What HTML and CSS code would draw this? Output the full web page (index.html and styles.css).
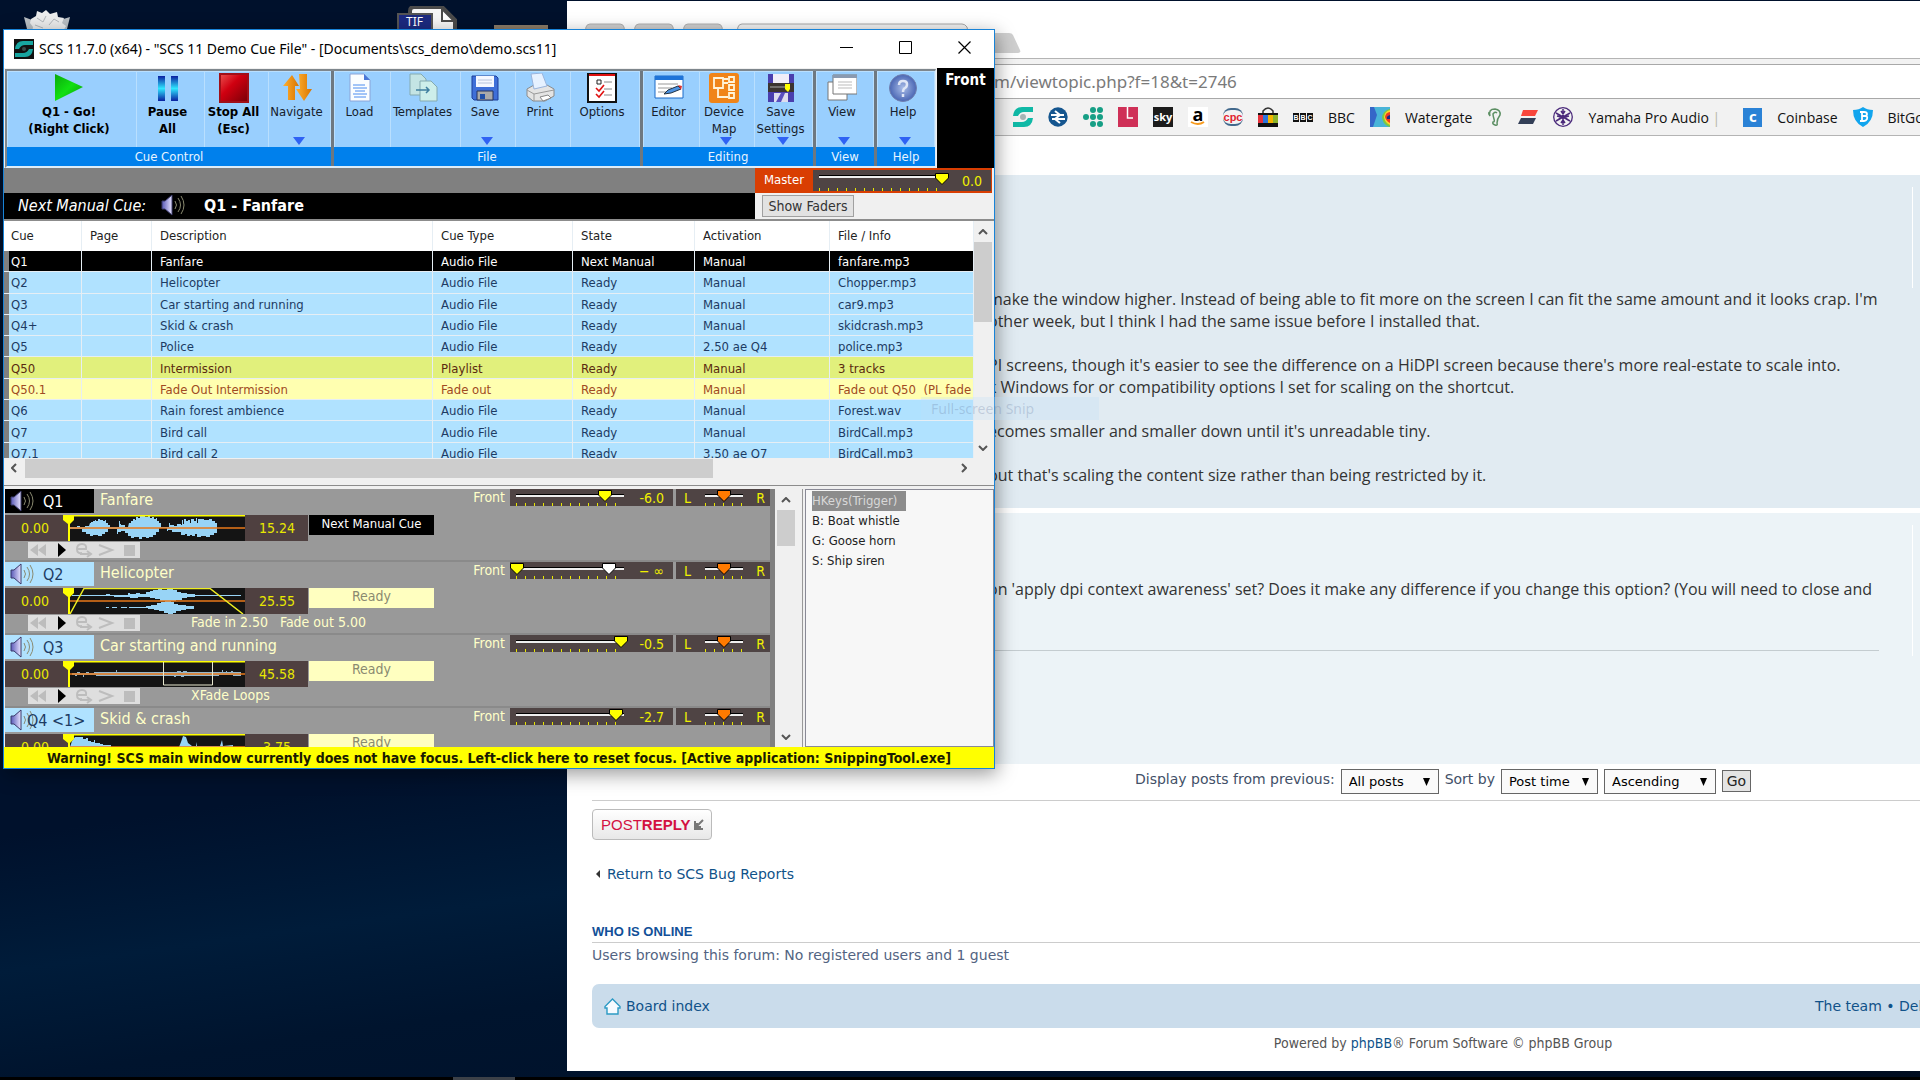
FILE: index.html
```html
<!DOCTYPE html>
<html lang="en">
<head>
<meta charset="utf-8">
<title>Desktop</title>
<link rel="stylesheet" href="styles.css">
</head>
<body>
<svg class="defs" aria-hidden="true">
  <defs>
    <linearGradient id="gGo" x1="0" y1="0" x2="1" y2="1"><stop offset="0" stop-color="#0aa80a"/><stop offset=".5" stop-color="#12e012"/><stop offset="1" stop-color="#0a9a0a"/></linearGradient>
    <linearGradient id="gPause" x1="0" y1="0" x2="0" y2="1"><stop offset="0" stop-color="#0a1fa0"/><stop offset=".5" stop-color="#2fe6ff"/><stop offset="1" stop-color="#0a1fa0"/></linearGradient>
    <linearGradient id="gStop" x1="0" y1="0" x2="1" y2="1"><stop offset="0" stop-color="#e84a4a"/><stop offset=".4" stop-color="#d00010"/><stop offset="1" stop-color="#7c0008"/></linearGradient>
    <linearGradient id="gNav" x1="0" y1="0" x2="1" y2="0"><stop offset="0" stop-color="#ffb030"/><stop offset="1" stop-color="#d87400"/></linearGradient>
    <linearGradient id="gSpk" x1="0" y1="0" x2="1" y2="0"><stop offset="0" stop-color="#5a5ab8"/><stop offset="1" stop-color="#e8e4ff"/></linearGradient>
    <radialGradient id="gHelp"><stop offset="0" stop-color="#a9bde8"/><stop offset="1" stop-color="#4a66b4"/></radialGradient>
    <symbol id="speaker" viewBox="0 0 24 22">
      <path d="M1 7h3l7-6v20l-7-6H1z" fill="url(#gSpk)" stroke="#3a3a6a" stroke-width="1"/>
      <path d="M14 7q3 4 0 8M17 4q5 7 0 14M20 2q6 9 0 18" fill="none" stroke="#8a8a70" stroke-width="1"/>
    </symbol>
    <symbol id="transport" viewBox="0 0 112 16">
      <path d="M10 2v12L2 8zM18 2v12l-8-6z" fill="#bdbdbd"/>
      <path d="M30 1v14l8-7z" fill="#000"/>
      <path d="M49 7h9q1-5-4-5-5 0-5 5t5 4M52 12h9M59 9l4 3-4 3" fill="none" stroke="#bdbdbd" stroke-width="2"/>
      <path d="M71 3l13 5-13 5" fill="none" stroke="#bdbdbd" stroke-width="2"/>
      <path d="M96 3h11v11H96z" fill="#bdbdbd"/>
    </symbol>
    <symbol id="marker" viewBox="0 0 14 27"><path d="M1 0h11v5L8 9v18H6V9L1 5z" fill="#ff0"/></symbol>
    <symbol id="floppy" viewBox="0 0 30 30">
      <path d="M2 3h24l2 2v22H4l-2-2z" fill="#3f6fd8" stroke="#1d3f9a"/>
      <path d="M6 3h18v11H6z" fill="#f4f7ff"/><path d="M8 7h14M8 10h14" stroke="#b8c4dc"/>
      <path d="M7 18h16v9H7z" fill="#a9a9a9" stroke="#27355e"/><path d="M10 21h5v5h-5z" fill="#1f4fa8"/>
    </symbol>
  </defs>
</svg>

<main class="desktop">
  <svg class="desk-icon bin" width="48" height="24" viewBox="0 0 48 24"><path d="M1 8l4 16h38l4-16-10 3H9z" fill="#b9bfc3"/><path d="M8 10l5-3 1-5 5 2 4-3 4 4 7-2 1 5 6 1-2 5 4 3-4 7H9l1-6-3-4z" fill="#eceded"/><path d="M14 9l6 4 3-6M26 16l5-6 5 3M12 16l8 3" fill="none" stroke="#b3b8bc"/></svg>
  <svg class="desk-icon tif" width="62" height="26" viewBox="0 0 62 26"><path d="M14 26V5q0-4 4-4h28l13 13v12" fill="#f6f6f6" stroke="#4b4b4b" stroke-width="4"/><path d="M46 3v12h12z" fill="#fff" stroke="#4b4b4b" stroke-width="2"/><rect x="2" y="8" width="34" height="20" fill="#1c2a80" stroke="#555" stroke-width="2"/><text x="10" y="20" class="tif-text">TIF</text></svg>
  <span class="desk-icon chest"></span>

  <section class="browser">
    <div class="tabstrip">
      <svg width="480" height="35" viewBox="0 0 480 35"><g fill="#cfcfcf" stroke="#b0b0b0"><path d="M14 35L19 4q1-3 4-3h30q3 0 4 3l4 31z"/><path d="M63 35L68 4q1-3 4-3h30q3 0 4 3l4 31z"/><path d="M112 35L117 4q1-3 4-3h30q3 0 4 3l4 31z"/></g><path d="M165 35L171 4q1-3 4-3h220q3 0 5 3l6 31z" fill="#f2f2f2" stroke="#a8a8a8"/><path d="M418 10h24q3 0 4 2l7 15q1 3-2 3h-25z" fill="#cfcfcf"/></svg>
    </div>
    <div class="omnibar"><input class="url" type="text" aria-label="Address" value="m/viewtopic.php?f=18&amp;t=2746"></div>
    <nav class="bookmarks" aria-label="Bookmarks">
      <a href="#" aria-label="SCS"><svg width="20" height="20" viewBox="0 0 20 20"><path d="M20 0v5h-9q-4 0-6 4l-5 0q1-9 9-9zM0 20v-5h9q4 0 6-4h5q-1 9-9 9z" fill="#10b9a6"/><circle cx="10" cy="10" r="3" fill="#a7b4b4"/></svg></a>
      <a href="#" aria-label="National Rail"><svg width="20" height="20" viewBox="0 0 20 20"><circle cx="10" cy="10" r="9.700" fill="#15568f"/><path d="M3 8h13M4 12h13M7 4l5 4-5 4 5 4" fill="none" stroke="#fff" stroke-width="2"/></svg></a>
      <a href="#" aria-label="Dots"><svg width="20" height="20" viewBox="0 0 20 20" fill="#169f85"><circle cx="3" cy="10" r="3"/><circle cx="10" cy="3" r="3"/><circle cx="10" cy="10" r="3"/><circle cx="10" cy="17" r="3"/><circle cx="17" cy="3" r="3"/><circle cx="17" cy="10" r="3"/><circle cx="17" cy="17" r="3"/></svg></a>
      <a href="#" aria-label="L"><svg width="20" height="20" viewBox="0 0 20 20"><path d="M0 0h20v20H0z" fill="#cf3057"/><path d="M9.500 0v11H15" fill="none" stroke="#fff" stroke-width="1.500"/></svg></a>
      <a href="#" class="bm-sky">sky</a>
      <a href="#" class="bm-amazon"><span>a</span><svg width="20" height="5" viewBox="0 0 20 5"><path d="M3 1q7 4 13 0" fill="none" stroke="#f79a1c" stroke-width="2"/></svg></a>
      <a href="#" class="bm-cpc">cpc</a>
      <a href="#" aria-label="Bag"><svg width="20" height="20" viewBox="0 0 20 20"><path d="M5 7V4q5-6 10 0v3" fill="none" stroke="#333" stroke-width="1.500"/><path d="M0 6h20v14H0z" fill="#111"/><path d="M0 8h5v8H0z" fill="#e8303a"/><path d="M5 8h5v8H5z" fill="#2a74dc"/><path d="M10 8h5v8h-5z" fill="#f4b400"/><path d="M15 8h5v8h-5z" fill="#8cb42a"/></svg></a>
      <a href="#"><span class="bm-bbc"><b>B</b><b>B</b><b>C</b></span>BBC</a>
      <a href="#"><svg width="20" height="20" viewBox="0 0 20 20"><path d="M0 0h20v20H0z" fill="#3566c8"/><path d="M3 20L7 8 4 0h16v20z" fill="#49b4d8"/><path d="M20 2a9 9 0 0 0-8 9q2 8 8 9z" fill="#7ac943"/><path d="M20 3a8 8 0 0 0-6 7q1 6 6 8z" fill="#ffd42a"/><path d="M20 5a6 6 0 0 0-5 5q1 4 5 6z" fill="#ef3b24"/><path d="M20 8q-4 1-3 4h3z" fill="#1c2a80"/></svg>Watergate</a>
      <a href="#" aria-label="Ear" class="bm-tight"><svg width="16" height="20" viewBox="0 0 16 20"><path d="M3 9Q1 2 8 2q6 1 5 6-3 4-3 8 1 3-2 2-3-1-2-3 2 0 1-3-1-3-1-5 2-3 4-1M3 9q-2-2-1-4" fill="none" stroke="#5c8f63" stroke-width="1.500"/></svg></a>
      <a href="#" aria-label="Stripes"><svg width="20" height="20" viewBox="0 0 20 20"><path d="M5 3h15l-3 6H3z" fill="#f8463c"/><path d="M3 11h15l-3 6H0z" fill="#333f57"/></svg></a>
      <a href="#"><svg width="20" height="20" viewBox="0 0 20 20" fill="none" stroke="#4b2a7b"><circle cx="10" cy="10" r="9.300" stroke-width="1.300"/><path d="M10 2v16M3 6l14 8M17 6L3 14M8 4l2 3 2-3M8 16l2-3 2 3M4 9l4 1-3 3M16 9l-4 1 3 3" stroke-width="1.500"/></svg><span>Yamaha Pro Audio <span class="faded">|</span></span></a>
      <a href="#" class="bm-gap"><span class="bm-coin">c</span>Coinbase</a>
      <a href="#"><svg width="20" height="20" viewBox="0 0 20 20"><path d="M0 3q6 0 10-3 4 3 10 3 0 12-10 17Q0 15 0 3z" fill="#12a5ee"/><path d="M7 5h4q3 0 3 2t-2 2q3 0 2 3-1 2-3 2H7M9 5v9M9 9h3" fill="none" stroke="#fff" stroke-width="1.800"/></svg>BitGo</a>
    </nav>
    <div class="forum">
      <article class="post post-a">
        <div class="postbody">
          <p>make the window higher. Instead of being able to fit more on the screen I can fit the same amount and it looks crap. I'm</p>
          <p>other week, but I think I had the same issue before I installed that.</p>
          <p>&nbsp;</p>
          <p>PI screens, though it's easier to see the difference on a HiDPI screen because there's more real-estate to scale into.</p>
          <p>k Windows for or compatibility options I set for scaling on the shortcut.</p>
          <p>&nbsp;</p>
          <p>ecomes smaller and smaller down until it's unreadable tiny.</p>
          <p>&nbsp;</p>
          <p>but that's scaling the content size rather than being restricted by it.</p>
        </div>
        <aside class="profile"></aside>
      </article>
      <article class="post post-b">
        <div class="postbody">
          <p>on 'apply dpi context awareness' set? Does it make any difference if you change this option? (You will need to close and</p>
          <hr>
        </div>
        <aside class="profile"></aside>
      </article>
      <form class="sort">
        <label for="st">Display posts from previous:</label>
        <select id="st" class="s1"><option>All posts</option></select>
        <label for="sk">Sort by</label>
        <select id="sk" class="s2"><option>Post time</option></select>
        <select id="sd" class="s3" aria-label="Direction"><option>Ascending</option></select>
        <button type="button" class="go">Go</button>
      </form>
      <button type="button" class="reply">POST<b>REPLY</b><svg width="10" height="11" viewBox="0 0 10 11"><path d="M9 1L3 7M1 2v8h8M3 4v4h4" fill="none" stroke="#777" stroke-width="2"/></svg></button>
      <p class="return"><svg width="5" height="8" viewBox="0 0 5 8"><path d="M4 0v8L0 4z" fill="#333"/></svg><a href="#">Return to SCS Bug Reports</a></p>
      <h3>WHO IS ONLINE</h3>
      <p class="online">Users browsing this forum: No registered users and 1 guest</p>
      <div class="navbar">
        <a href="#"><svg width="17" height="17" viewBox="0 0 17 17"><path d="M8.500 1L16 8.500V10h-2v6H3v-6H1V8.500z" fill="#f6fbff" stroke="#2c9ac4" stroke-width="1.400"/></svg>Board index</a>
        <span class="team"><a href="#">The team</a> • <a href="#">Delete all</a></span>
      </div>
      <p class="powered">Powered by <a href="#">phpBB</a>® Forum Software © phpBB Group</p>
    </div>
  </section>

  <section class="scs">
    <header class="titlebar">
      <svg width="20" height="20" viewBox="0 0 20 20"><path d="M0 0h20v20H0z" fill="#111"/><path d="M19 2v4h-8q-4 0-6 4H1q1-8 8-8zM1 18v-4h8q4 0 6-4h4q-1 8-8 8z" fill="#18a5a0"/><circle cx="10" cy="10" r="2" fill="#3c4a4a"/></svg>
      <h1>SCS 11.7.0 (x64) - "SCS 11 Demo Cue File" - [Documents\scs_demo\demo.scs11]</h1>
      <button type="button" aria-label="Minimize"><svg width="13" height="13" viewBox="0 0 13 13"><path d="M0 6.500h13" stroke="#000"/></svg></button>
      <button type="button" aria-label="Maximize"><svg width="13" height="13" viewBox="0 0 13 13"><path d="M.5.5h12v12H.5z" fill="none" stroke="#000"/></svg></button>
      <button type="button" aria-label="Close"><svg width="13" height="13" viewBox="0 0 13 13"><path d="M.5.5l12 12M12.500.5l-12 12" stroke="#000" stroke-width="1.200"/></svg></button>
    </header>

    <div class="ribbon-row">
      <div class="ribbon">
        <div class="group g-cue">
          <div class="btns">
            <button type="button" class="strong"><svg width="30" height="30" viewBox="0 0 30 30"><path d="M1 1v27l28-14z" fill="url(#gGo)"/></svg>Q1 - Go!<br>(Right Click)</button>
            <button type="button" class="strong"><svg width="30" height="30" viewBox="0 0 30 30"><path d="M5 3h7v25H5zM18 3h7v25h-7z" fill="url(#gPause)"/></svg>Pause<br>All</button>
            <button type="button" class="strong"><svg width="30" height="30" viewBox="0 0 30 30"><path d="M0 0h30v30H0z" fill="#a01018"/><path d="M2 2h26v26H2z" fill="url(#gStop)"/></svg>Stop All<br>(Esc)</button>
            <button type="button"><svg width="30" height="30" viewBox="0 0 30 30"><path d="M10 2l7 11h-4v14H6V13H1z" fill="url(#gNav)"/><path d="M17 1h8v15h5l-8 12-8-12h4z" fill="url(#gNav)"/></svg>Navigate<i class="drop"></i></button>
          </div>
          <div class="glabel">Cue Control</div>
        </div>
        <div class="group g-file">
          <div class="btns">
            <button type="button"><svg width="30" height="30" viewBox="0 0 30 30"><path d="M5 1h14l6 6v21H5z" fill="#fafdff" stroke="#8aa4d8"/><path d="M19 1v6h6z" fill="#4a78d8"/><path d="M8 12h12M8 15h14M10 18h10M8 21h14M9 24h12" stroke="#4a8cf0"/></svg>Load</button>
            <button type="button"><svg width="30" height="30" viewBox="0 0 30 30"><path d="M2 1h11l5 5v16H2z" fill="#c4e4e4" stroke="#84aab0"/><path d="M12 8h11l6 6v14H12z" fill="#cdeeea" stroke="#84aab0"/><path d="M8 17h13M18 14l3 3-3 3" fill="none" stroke="#3f7f9f" stroke-width="1.500"/></svg>Templates</button>
            <button type="button"><svg width="30" height="30"><use href="#floppy"/></svg>Save<i class="drop"></i></button>
            <button type="button"><svg width="30" height="30" viewBox="0 0 30 30"><path d="M2 16l7-4h13l7 4v7l-9 5H8l-6-5z" fill="#e4e4e4" stroke="#8a8a8a"/><path d="M6 1l11-1 5 13-13 3z" fill="#e6f1ff" stroke="#9ab4dc"/><path d="M2 17l7 4 20-4M9 21v7" fill="none" stroke="#9a9a9a"/><path d="M15 24l8-2 3 3-8 3z" fill="#fff" stroke="#888"/></svg>Print</button>
            <button type="button"><svg width="30" height="30" viewBox="0 0 30 30"><path d="M1 1h28v28H1z" fill="#fff" stroke="#111" stroke-width="2"/><path d="M2 1h26v2H2z" fill="#e01010"/><path d="M10 7h4v4h-4z" fill="none" stroke="#222"/><path d="M17 9h8M17 16h8M17 22h8" stroke="#888"/><path d="M9 15l3 3 5-6M9 21l3 3 5-6" fill="none" stroke="#e01010" stroke-width="1.600"/></svg>Options</button>
          </div>
          <div class="glabel">File</div>
        </div>
        <div class="group g-edit">
          <div class="btns">
            <button type="button"><svg width="30" height="30" viewBox="0 0 30 30"><path d="M1 3h28v22H1z" fill="#fff" stroke="#1a6ac8"/><path d="M1 3h28v4H1z" fill="#1f74d8"/><path d="M4 11h20M4 15h14M4 19h8" stroke="#999"/><path d="M10 21l4-4 10-4 3 3-10 4z" fill="#4d92e0" stroke="#234"/><path d="M24 12l4 1-1 4z" fill="#d33"/></svg>Editor</button>
            <button type="button"><svg width="30" height="30" viewBox="0 0 30 30"><rect width="30" height="30" rx="3" fill="#f08418"/><path d="M5 5h9v10H5zM14 6h5M9 15v9h10M20 4h5v5h-5zM20 12h5v5h-5zM20 20h5v5h-5zM14 10h5" fill="none" stroke="#fff3d8" stroke-width="1.800"/></svg>Device<br>Map<i class="drop"></i></button>
            <button type="button"><svg width="30" height="30" viewBox="0 0 30 30"><path d="M2 1h26v28H2z" fill="#4a3fae"/><path d="M7 1h16v9H7z" fill="#f1eef8"/><path d="M2 10h26v9H2z" fill="#3c3430"/><path d="M4 14h20" stroke="#aaa"/><path d="M19 11h5v5l-2 3-3-3z" fill="#ff0"/><path d="M8 20h14v9H8z" fill="#dde"/><path d="M10 29l5-9h4l-4 9z" fill="#5a4fbe"/></svg>Save<br>Settings<i class="drop"></i></button>
          </div>
          <div class="glabel">Editing</div>
        </div>
        <div class="group g-view">
          <div class="btns"><button type="button"><svg width="30" height="30" viewBox="0 0 30 30"><path d="M1 9h19v18H1z" fill="#fff" stroke="#777"/><path d="M6 2h24v19H6z" fill="#fff" stroke="#777"/><path d="M6 2h24v3H6z" fill="#8a9ab0"/><path d="M11 9h14M11 12h14M11 15h14" stroke="#bbb"/></svg>View<i class="drop"></i></button></div>
          <div class="glabel">View</div>
        </div>
        <div class="group g-help">
          <div class="btns"><button type="button"><svg width="30" height="30" viewBox="0 0 30 30"><circle cx="15" cy="15" r="13.500" fill="url(#gHelp)" stroke="#7080b0"/><path d="M11 12q0-4 4-4t4 3q0 3-2 4-2 1-2 4M15 21v3" fill="none" stroke="#dfe6f6" stroke-width="2.500"/></svg>Help<i class="drop"></i></button></div>
          <div class="glabel">Help</div>
        </div>
      </div>
      <div class="front-meter">Front</div>
    </div>

    <div class="status-row">
      <div class="status-left">
        <div class="gap-bar"></div>
        <div class="next"><em>Next Manual Cue:</em><svg width="24" height="22"><use href="#speaker"/></svg><strong>Q1 - Fanfare</strong></div>
      </div>
      <div class="status-right">
        <div class="master"><label for="master">Master</label><div class="fader"><input id="master" type="range" min="0" max="100" value="100"><output>0.0</output></div></div>
        <div class="faders"><button type="button">Show Faders</button></div>
      </div>
    </div>

    <div class="cue-list">
      <div class="table-wrap">
        <table>
          <colgroup><col class="c0"><col class="c1"><col class="c2"><col class="c3"><col class="c4"><col class="c5"><col class="c6"><col class="c7"></colgroup>
          <thead><tr><th></th><th>Cue</th><th>Page</th><th>Description</th><th>Cue Type</th><th>State</th><th>Activation</th><th>File / Info</th></tr></thead>
          <tbody>
            <tr class="sel"><td></td><td>Q1</td><td></td><td>Fanfare</td><td>Audio File</td><td>Next Manual</td><td>Manual</td><td>fanfare.mp3</td></tr>
            <tr><td></td><td>Q2</td><td></td><td>Helicopter</td><td>Audio File</td><td>Ready</td><td>Manual</td><td>Chopper.mp3</td></tr>
            <tr><td></td><td>Q3</td><td></td><td>Car starting and running</td><td>Audio File</td><td>Ready</td><td>Manual</td><td>car9.mp3</td></tr>
            <tr><td></td><td>Q4+</td><td></td><td>Skid &amp; crash</td><td>Audio File</td><td>Ready</td><td>Manual</td><td>skidcrash.mp3</td></tr>
            <tr><td></td><td>Q5</td><td></td><td>Police</td><td>Audio File</td><td>Ready</td><td>2.50 ae Q4</td><td>police.mp3</td></tr>
            <tr class="playlist"><td></td><td>Q50</td><td></td><td>Intermission</td><td>Playlist</td><td>Ready</td><td>Manual</td><td>3 tracks</td></tr>
            <tr class="fade"><td></td><td>Q50.1</td><td></td><td>Fade Out Intermission</td><td>Fade out</td><td>Ready</td><td>Manual</td><td>Fade out Q50&nbsp; (PL fade</td></tr>
            <tr><td></td><td>Q6</td><td></td><td>Rain forest ambience</td><td>Audio File</td><td>Ready</td><td>Manual</td><td>Forest.wav</td></tr>
            <tr><td></td><td>Q7</td><td></td><td>Bird call</td><td>Audio File</td><td>Ready</td><td>Manual</td><td>BirdCall.mp3</td></tr>
            <tr><td></td><td>Q7.1</td><td></td><td>Bird call 2</td><td>Audio File</td><td>Ready</td><td>3.50 ae Q7</td><td>BirdCall.mp3</td></tr>
          </tbody>
        </table>
      </div>
      <div class="vscroll"><svg width="10" height="6" viewBox="0 0 10 6"><path d="M1 5l4-4 4 4" class="chev"/></svg><span class="vthumb"></span><svg width="10" height="6" viewBox="0 0 10 6"><path d="M1 1l4 4 4-4" class="chev"/></svg></div>
      <div class="hscroll"><svg width="6" height="10" viewBox="0 0 6 10"><path d="M5 1L1 5l4 4" class="chev"/></svg><span class="hthumb"></span><svg width="6" height="10" viewBox="0 0 6 10"><path d="M1 1l4 4-4 4" class="chev"/></svg></div>
    </div>

    <div class="panels">
      <div class="players">
        <div class="player first">
          <div class="p-id"><svg width="24" height="22"><use href="#speaker"/></svg>Q1</div>
          <div class="p-title">Fanfare</div>
          <div class="p-dev">Front</div>
          <div class="fader"><input type="range" aria-label="Q1 level" min="0" max="100" value="83"><output>-6.0</output></div>
          <div class="pan"><span>L</span><input type="range" aria-label="Q1 pan" value="50"><span>R</span></div>
          <div class="p-wave"><span>0.00</span>
            <svg width="184" height="26" viewBox="0 0 184 26"><path d="M6 0h177v26H6z" fill="#141414"/><path d="M8 12h7v-1h3v1h5v-1h4l1-3h1V7h2V6h2V5h1v1h2V4h2v1h3v1h2V5h1v3h2v2h2v2h9V6h1v3h1v1h4v2h3l1-4h2V6h2V4h2v1h1V2h2v1h2V1h5v1h3V1h2v2h2V2h2v2h2V3h1v3h2v2h2v4h8v-4h1v2h4v1h3V9h4v1h1V5h1v4h1V4h2v2h2V5h2v3h1V4h3v2h2V3h1v5h1V4h6v1h5V4h3v2h3v2h2v10h-3v2h-4v2h-4v-1h-5v1h-4v-3h-2v2h-3v-1h-2v1h-3v-2h-2v1h-4v-3h-9v-2h-4v1h-1v-3h-8v4h-3v3h-3v2h-4v1h-3v-1h-4v2h-3v-2h-5v1h-3v-2h-3v-3h-3v-2h-4v1h-3v2h-1v-5h-9v3h-3v2h-3v2h-4v-1h-5v1h-3v-2h-4v-2h-4v-3H8z" fill="#98d4f6"/><path d="M6 13h177" stroke="#e87818" stroke-width="1.500"/><path d="M6 .5h177" stroke="#ff0" stroke-width="2"/><use href="#marker" x="0" y="0" width="14" height="27"/></svg>
            <span>15.24</span></div>
          <div class="p-state">Next Manual Cue</div>
          <svg class="transport" width="112" height="16"><use href="#transport"/></svg>
        </div>
        <div class="player">
          <div class="p-id"><svg width="24" height="22"><use href="#speaker"/></svg>Q2</div>
          <div class="p-title">Helicopter</div>
          <div class="p-dev">Front</div>
          <div class="fader"><input type="range" aria-label="Q2 level" min="0" max="100" value="0"><i class="ghost"></i><output>− ∞</output></div>
          <div class="pan"><span>L</span><input type="range" aria-label="Q2 pan" value="50"><span>R</span></div>
          <div class="p-wave"><span>0.00</span>
            <svg width="184" height="26" viewBox="0 0 184 26"><path d="M6 0h177v26H6z" fill="#141414"/><path d="M10 7h34V6h4v1h18V5h2v1h6V5h4v1h6V4h4V3h3V2h5V1h4v1h5V1h6v1h4v2h4v1h6v1h8v1h46v1h-46v1h-8v1h-5v2h-6v1h-5v1h-6v-1h-5v-2h-5v-1h-5V9H76v1h-8V9H52V8H10zM44 19h3v1h-3zM50 19h5v1h-5zM59 19h6v1h-6zM67 19h17v-1h5v-1h6v-2h4v-1h5v-1h3v1h5v2h4v1h8v1h8v3h-8v1h-5v1h-5v2h-3v1h-5v-1h-4v-2h-5v-1h-5v-1h-6v-1H67z" fill="#98d4f6"/><path d="M6 13h177" stroke="#e87818" stroke-width="1.500"/><path d="M8 26L22 .5h126L181 26" fill="none" stroke="#ee2" stroke-width="1.500"/><use href="#marker" width="14" height="27"/></svg>
            <span>25.55</span></div>
          <div class="p-state">Ready</div>
          <svg class="transport" width="112" height="16"><use href="#transport"/></svg>
          <div class="p-info">Fade in 2.50&nbsp;&nbsp; Fade out 5.00</div>
        </div>
        <div class="player">
          <div class="p-id"><svg width="24" height="22"><use href="#speaker"/></svg>Q3</div>
          <div class="p-title">Car starting and running</div>
          <div class="p-dev">Front</div>
          <div class="fader"><input type="range" aria-label="Q3 level" min="0" max="100" value="98"><output>-0.5</output></div>
          <div class="pan"><span>L</span><input type="range" aria-label="Q3 pan" value="50"><span>R</span></div>
          <div class="p-wave"><span>0.00</span>
            <svg width="184" height="26" viewBox="0 0 184 26"><path d="M6 0h177v26H6z" fill="#141414"/><path d="M10 12h5v-1h3v1h6v-1h3v1h5v-1h22V9h1v2h60v-1h4v1h2v-1h4v1h35v-2h1v2h3v-1h1v1h4v-1h2v1h8v4h-8v-1h-14v1h-35v1h-3v-1h-5v1h-2v-1H34v-1H22v2h-1v-2h-6v1h-2v-1h-3z" fill="#98b8cc"/><path d="M6 13h177" stroke="#e87818" stroke-width="1.500"/><path d="M6 .5h177" stroke="#ff0" stroke-width="2"/><path d="M101.500 1v23h49V1" fill="none" stroke="#e8e8d0"/><use href="#marker" width="14" height="27"/></svg>
            <span>45.58</span></div>
          <div class="p-state">Ready</div>
          <svg class="transport" width="112" height="16"><use href="#transport"/></svg>
          <div class="p-info">XFade Loops</div>
        </div>
        <div class="player">
          <div class="p-id wide"><svg width="24" height="22"><use href="#speaker"/></svg>Q4 &lt;1&gt;</div>
          <div class="p-title">Skid &amp; crash</div>
          <div class="p-dev">Front</div>
          <div class="fader"><input type="range" aria-label="Q4 level" min="0" max="100" value="93"><output>-2.7</output></div>
          <div class="pan"><span>L</span><input type="range" aria-label="Q4 pan" value="50"><span>R</span></div>
          <div class="p-wave"><span>0.00</span>
            <svg width="184" height="26" viewBox="0 0 184 26"><path d="M6 0h177v26H6z" fill="#141414"/><path d="M8 13l2-6 3-4h8v2h3v-1h2v3h3v1h3V6h1v3h5v1h3v1h8v2h68l2-5 2-6 3 1 2 6 4 3h4V8l1 4h23l2-6 1 6 10-1v2zM8 13h40l-20 5H10z" fill="#98d4f6"/><path d="M6 13h177" stroke="#e87818" stroke-width="1.500"/><path d="M6 .5h177" stroke="#ff0" stroke-width="2"/><use href="#marker" width="14" height="27"/></svg>
            <span>3.75</span></div>
          <div class="p-state">Ready</div>
        </div>
      </div>
      <div class="vscroll side"><svg width="10" height="6" viewBox="0 0 10 6"><path d="M1 5l4-4 4 4" class="chev"/></svg><span class="vthumb"></span><svg width="10" height="6" viewBox="0 0 10 6"><path d="M1 1l4 4 4-4" class="chev"/></svg></div>
      <ul class="hotkeys">
        <li class="hk-head">HKeys(Trigger)</li>
        <li>B: Boat whistle</li>
        <li>G: Goose horn</li>
        <li>S: Ship siren</li>
      </ul>
    </div>
    <div class="warning">Warning! SCS main window currently does not have focus. Left-click here to reset focus. [Active application: SnippingTool.exe]</div>
  </section>

  <div class="snip">Full-screen Snip</div>
  <div class="taskbar"><span></span></div>
</main>
</body>
</html>
```

FILE: styles.css
```css
* { box-sizing: border-box; }
body, h1, h3, p, ul { margin: 0; padding: 0; }
body { font-family: "DejaVu Sans Condensed", "DejaVu Sans", sans-serif; font-size: 13px; }
button { font: inherit; color: inherit; border: 0; padding: 0; background: none; }
a { color: inherit; text-decoration: none; }
.defs { position: absolute; width: 0; height: 0; }

.desktop {
  position: relative; height: 100vh; overflow: hidden;
  background: linear-gradient(172deg, #00112c 0%, #00112c 62%, #001c3a 72%, #00142e 80%, #00112a 92%, #000c1f 100%);
}
.desk-icon { position: absolute; }
.bin { left: 23px; top: 9px; }
.tif { left: 396px; top: 6px; }
.tif-text { font: 12px "Noto Sans", sans-serif; fill: #fff; }
.chest { left: 494px; top: 25px; width: 54px; height: 5px; background: #8a7c68; }
.taskbar { position: absolute; left: 0; right: 0; bottom: 0; height: 3px; background: #000; }
.taskbar span { display: block; width: 62px; height: 3px; margin-left: 453px; background: #3c4148; }
.snip {
  position: absolute; left: 921px; top: 397px; width: 178px; height: 23px; padding-left: 10px;
  font: 14px/23px "Noto Sans", sans-serif; color: rgba(90, 110, 150, .25); background: rgba(190, 222, 248, .28);
}

/* browser window */
.browser {
  position: absolute; left: 567px; right: 0; top: 1px; bottom: 9px; overflow: hidden;
  background: #fff; font-family: "DejaVu Sans", sans-serif;
}
.tabstrip { height: 58px; padding-top: 22px; border-bottom: 1px solid #b4b4b4; }
.tabstrip svg { display: block; }
.omnibar { padding-top: 5px; background: #f2f2f2; }
.url {
  display: block; width: 100%; height: 35px; border: 1px solid #a8a8a8; border-width: 1px 0; padding: 0 0 0 427px;
  font: 17px "Noto Sans", sans-serif; color: #7a7a7a; background: #fff; outline: 0;
}
.bookmarks {
  display: flex; align-items: center; gap: 15px; height: 37px; padding-left: 446px;
  background: #f2f2f2; border-bottom: 1px solid #b4b4b4; font: 14px "Open Sans", sans-serif; color: #111; white-space: nowrap;
}
.bookmarks a { display: flex; align-items: center; gap: 15px; flex: none; }
.bookmarks svg { display: block; }
.bookmarks .bm-sky { width: 20px; height: 20px; justify-content: center; background: #1c1c1c; color: #fff; font: bold 11px/18px "Open Sans", sans-serif; }
.bookmarks .bm-amazon { flex-direction: column; gap: 0; width: 20px; height: 20px; background: #fff; color: #000; font: bold 18px/14px "Open Sans", sans-serif; }
.bookmarks .bm-cpc { width: 20px; height: 18px; justify-content: center; border: 2px solid #41688c; border-width: 2px 0; border-radius: 8px; color: #e02430; font: bold 11px/12px "Liberation Sans", sans-serif; }
.bm-bbc { display: flex; gap: 1px; }
.bm-bbc b { width: 6px; height: 9px; background: #111; color: #fff; font: bold 7px/9px "Liberation Sans", sans-serif; text-align: center; }
.bm-coin { width: 19px; height: 19px; background: #2a82d6; color: #fff; font: bold 15px/17px "Open Sans", sans-serif; text-align: center; }
.faded { color: #b8b8a8; }
.bookmarks .bm-gap { margin-left: 8px; }

.forum { width: calc(100% + 374px); margin-top: 39px; padding-left: 25px; padding-right: 0; }
.post { display: flex; }
.post-a { min-height: 333px; margin-left: -25px; padding: 12px 0 21px 25px; background: #e1ebf2; }
.post-b { min-height: 251px; margin: 5px 0 0 -25px; padding: 12px 0 12px 25px; background: #ecf3f7; }
.postbody { flex: 1; padding-left: 396px; padding-right: 33px; font: 16px/22px "Open Sans", sans-serif; color: #333; white-space: nowrap; }
.post-a .postbody { padding-top: 101px; }
.post-b .postbody { padding-top: 53px; }
.postbody hr { margin: 50px 0 0; border: 0; border-top: 1px solid #c4ccd0; }
.profile { width: 382px; height: 101px; border-left: 1px solid #fff; }
.post-b .profile { height: 131px; }

.sort { display: flex; justify-content: center; height: 37px; padding-top: 5px; gap: 6px; border-bottom: 1px solid #ccc; font-size: 14px; line-height: 21px; color: #425067; }
.sort select {
  appearance: none; height: 25px; padding: 0 7px; border: 1px solid #666; border-radius: 0; color: #000;
  font: 13px "DejaVu Sans", sans-serif;
  background: #fafafa url("data:image/svg+xml,%3Csvg xmlns='http://www.w3.org/2000/svg' width='7' height='8'%3E%3Cpath d='M0 0h7L3.500 8z'/%3E%3C/svg%3E") no-repeat right 8px center;
}
.sort .s1 { width: 98px; }
.sort .s2 { width: 97px; }
.sort .s3 { width: 112px; }
.go { height: 22px; width: 29px; margin-top: 1px; border: 1px solid #666; background: #e4e4e4; color: #222; }
.reply {
  display: flex; align-items: center; width: 120px; height: 31px; margin-top: 8px; padding-left: 8px;
  border: 1px solid #bbb; border-radius: 4px; background: linear-gradient(#fff, #e8e8e8);
  font: 15px "Liberation Sans", sans-serif; color: #d31141;
}
.reply svg { margin-left: 4px; }
.return { display: flex; align-items: center; gap: 6px; margin: 23px 0 0 4px; font-size: 14px; line-height: 22px; color: #105289; }
.forum h3 { margin-top: 38px; padding-bottom: 1px; border-bottom: 1px solid #ccc; font: bold 13px/18px "Liberation Sans", sans-serif; color: #115098; }
.online { font-size: 14px; line-height: 24px; color: #536482; }
.navbar { display: flex; align-items: center; justify-content: space-between; height: 44px; margin-top: 17px; padding-left: 12px; border-radius: 7px; background: #cadceb; color: #105289; font-size: 14px; }
.navbar > a { display: flex; align-items: center; gap: 5px; }
.team { width: 479px; }
.powered { margin-top: 4px; text-align: center; font: 14px/22px "DejaVu Sans Condensed", sans-serif; color: #555; }
.powered a { color: #105289; }

/* cue player window */
.scs {
  position: absolute; left: 3px; top: 29px; width: 992px; border: 1px solid #1883d7; background: #f0f0f0;
  box-shadow: 2px 5px 18px rgba(0, 0, 0, .4);
}
.titlebar { display: flex; align-items: center; height: 38px; padding-left: 10px; background: #fff; }
.titlebar h1 { flex: 1; margin-left: 5px; padding-bottom: 2px; font: 14px "Noto Sans", sans-serif; color: #000; white-space: nowrap; }
.titlebar button { width: 59px; height: 38px; }

.ribbon-row { display: flex; height: 100px; }
.ribbon { flex: 1; display: flex; gap: 3px; margin: 1px 1px 0; border: 2px solid #7e868c; border-bottom: 2px solid #dcecf8; border-right: 1px solid #dcecf8; background: #6e7880; }
.group { display: flex; flex-direction: column; }
.btns { flex: 1; display: flex; background: #99cffe; border: 1px solid #b9dffe; border-bottom: 0; }
.btns button { flex: 1 1 auto; display: flex; flex-direction: column; align-items: center; padding: 1px 6px 0 0; line-height: 17px; white-space: nowrap; color: #16202c; border-right: 1px solid #b9dffe; }
.btns button:last-child { border-right: 0; }
.btns .strong { font-weight: bold; color: #000; }
.btns svg { flex: none; display: block; }
.drop { margin: auto 0 2px 4px; border: 6px solid transparent; border-top: 8px solid #2f62f4; border-bottom: 0; }
.glabel { height: 19px; background: #0080ec; color: #e8f4ff; text-align: center; line-height: 20px; }
.g-cue { width: 324px; }
.g-cue .btns { display: grid; grid-template-columns: 129px 68px 64px 61px; }
.g-file { width: 306px; }
.g-file .btns { display: grid; grid-template-columns: 56px 70px 55px 55px 68px; }
.g-edit { width: 170px; }
.g-edit .btns { display: grid; grid-template-columns: 56px 55px 57px; }
.g-view { width: 58px; }
.g-help { flex: 1; }
.front-meter { width: 57px; background: #000; color: #fff; font: bold 15px "DejaVu Sans Condensed", sans-serif; line-height: 24px; text-align: center; }

.status-row { display: flex; height: 53px; border-bottom: 2px solid #8c8c8c; }
.status-left { flex: 1; }
.gap-bar { height: 25px; background: #808080; }
.next { display: flex; align-items: center; height: 26px; padding: 0 0 2px 14px; background: #000; color: #fff; font-size: 16px; }
.next em { width: 143px; }
.next strong { margin-left: 19px; }
.status-right { width: 239px; padding-right: 2px; background: #f0f0f0; }
.master { display: flex; height: 25px; padding: 2px 1px 2px 0; background: #d93e02; color: #fff; }
.master label { width: 58px; line-height: 19px; text-align: center; }
.faders { height: 26px; padding: 2px 7px 0; }
.faders button { width: 92px; height: 22px; border: 1px solid #a0a0a0; background: #e2e2e2; color: #333; font-size: 14px; }

.fader, .pan { display: flex; align-items: center; background: #4f4444; color: #f0f000; font-size: 14px; }
.fader { position: relative; flex: 1; }
.fader output { flex: 1; padding-right: 9px; text-align: right; white-space: nowrap; }
.master .fader input { width: 136px; }
.fader input, .pan input {
  appearance: none; width: 120px; height: 100%; margin: 0; outline: 0;
  background:
    linear-gradient(#000, #000) 6px 5px / calc(100% - 12px) 1px no-repeat,
    linear-gradient(#eee, #eee) 6px 6px / calc(100% - 12px) 2px no-repeat,
    repeating-linear-gradient(90deg, #e8e800 0 1px, transparent 1px 9px) 6px bottom / calc(100% - 12px) 3px no-repeat;
}
input::-webkit-slider-thumb {
  appearance: none; width: 14px; height: 12px; margin-bottom: 4px;
  background: url("data:image/svg+xml,%3Csvg xmlns='http://www.w3.org/2000/svg' width='14' height='12'%3E%3Cpath d='M.5.5h13V5L7 11.500.5 5z' fill='%23ff0' stroke='%23000'/%3E%3C/svg%3E");
}
.pan input::-webkit-slider-thumb {
  background: url("data:image/svg+xml,%3Csvg xmlns='http://www.w3.org/2000/svg' width='14' height='12'%3E%3Cpath d='M.5.5h13V5L7 11.500.5 5z' fill='%23ff7a00' stroke='%23000'/%3E%3C/svg%3E");
}
.ghost {
  position: absolute; left: 92px; top: 1px; width: 14px; height: 12px;
  background: url("data:image/svg+xml,%3Csvg xmlns='http://www.w3.org/2000/svg' width='14' height='12'%3E%3Cpath d='M.5.5h13V5L7 11.500.5 5z' fill='%23fff' stroke='%23000'/%3E%3C/svg%3E");
}

.cue-list { display: grid; grid-template-columns: 1fr 20px; grid-template-rows: 237px 27px; height: 265px; border-bottom: 1px solid #8c8c8c; background: #f0f0f0; }
.table-wrap { overflow: hidden; background: #fff; }
table { width: 970px; height: 243px; table-layout: fixed; border-collapse: separate; border-spacing: 0; white-space: nowrap; }
th, td { padding: 0 0 0 8px; overflow: hidden; border-right: 1px solid #e6eef4; }
thead tr { height: 30px; }
th { padding-bottom: 2px; font-weight: normal; text-align: left; color: #222; background: #fff; }
td { padding-top: 2px; line-height: 16px; border-bottom: 1px solid #e6eef4; background: #b0e2ff; color: #1d3b63; }
th:first-child, td:first-child { padding: 0; border-right: 0; }
th:nth-child(2), td:nth-child(2) { padding-left: 2px; }
td:first-child { background: #808080; }
.sel td:not(:first-child) { background: #000; color: #fff; }
.playlist td:not(:first-child) { background: #e1f07c; color: #5a2a10; }
.fade td:not(:first-child) { background: #ffffb0; color: #a04a22; }
.c0 { width: 5px; } .c1 { width: 73px; } .c2 { width: 70px; } .c3 { width: 281px; }
.c4 { width: 140px; } .c5 { width: 122px; } .c6 { width: 135px; } .c7 { width: 144px; }
.chev { fill: none; stroke: #555; stroke-width: 2; }
.vscroll { display: flex; flex-direction: column; align-items: center; padding: 8px 2px 7px 0; background: #f0f0f0; }
.vscroll svg, .hscroll svg { flex: none; }
.vthumb { width: 18px; height: 80px; margin: 7px 0 auto; background: #cdcdcd; }
.hscroll { grid-column: 1 / 3; display: flex; align-items: center; height: 20px; padding: 0 27px 0 7px; }
.hthumb { width: 688px; height: 19px; margin: 0 auto 0 8px; background: #cdcdcd; }

.panels { display: flex; height: 261px; padding-top: 3px; }
.players { flex: 1; overflow: hidden; margin-left: 1px; border-right: 5px solid #808080; background: #999; }
.player {
  display: grid; height: 73px; border-bottom: 2px solid #8a8a8a;
  grid-template-columns: 89px 215px 125px 76px 163px 3px 95px; grid-template-rows: 17px 8px 1px 26px 1px 16px;
}
.p-id { grid-area: 1 / 1 / 3 / 2; display: flex; align-items: center; gap: 9px; height: 24px; padding-left: 5px; background: #b0e2ff; color: #1d3b63; font-size: 16px; }
.first .p-id { background: #000; color: #fff; }
.p-id.wide { gap: 0; }
.p-id.wide svg { margin-right: -7px; }
.p-title { grid-area: 1 / 2 / 3 / 4; padding-left: 6px; color: #ffffc8; font-size: 16px; line-height: 22px; }
.p-dev { grid-area: 1 / 4; padding-right: 5px; text-align: right; color: #ffffc8; font-size: 14px; }
.player .fader { grid-area: 1 / 5; }
.pan { grid-area: 1 / 7; justify-content: space-between; padding: 0 6px 0 8px; }
.pan input { width: 50px; }
.p-wave { grid-area: 4 / 1 / 5 / 3; width: 303px; display: flex; background: #4f4040; color: #e8e800; font-size: 14px; line-height: 26px; }
.p-wave svg { flex: none; }
.p-wave span { flex: none; width: 57px; padding-left: 16px; }
.p-wave span:last-child { width: 62px; padding: 0; text-align: center; }
.p-state { grid-area: 4 / 3; height: 20px; background: #ffffc0; color: #8a8a70; text-align: center; font-size: 14px; line-height: 17px; }
.first .p-state { background: #000; color: #fff; font-size: 13px; }
.transport { grid-area: 6 / 1 / 7 / 3; margin-left: 23px; background: #dedede; }
.p-info { grid-area: 6 / 2 / 7 / 5; margin-left: 97px; color: #ffffc8; font-size: 14px; line-height: 14px; }
.side { width: 28px; padding-right: 6px; border-right: 1px solid #999; }
.side .vthumb { height: 36px; }
.hotkeys { width: 189px; margin-left: 2px; padding: 1px 6px; border: 1px solid #8a8a96; background: #f7f7f7; list-style: none; color: #222; line-height: 20px; }
.hk-head { width: 94px; background: #8c8c8c; color: #d8d8d8; white-space: nowrap; }
.warning { height: 21px; background: #ff0; color: #1a1a00; font-size: 14px; font-weight: bold; line-height: 22px; text-align: center; white-space: nowrap; }
```
